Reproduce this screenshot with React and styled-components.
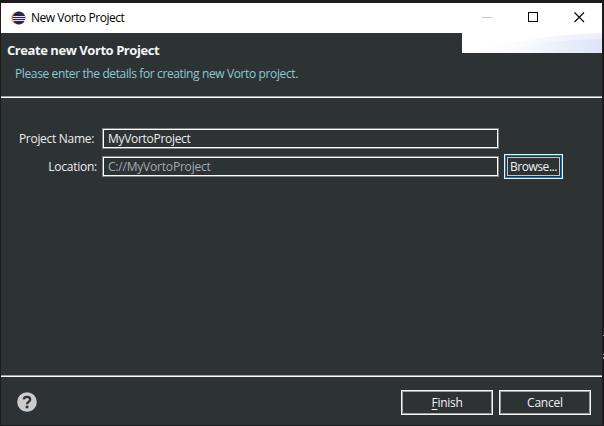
import React from "react";
import styled, { createGlobalStyle } from "styled-components";

const GlobalStyle = createGlobalStyle`
  * { box-sizing: border-box; }
  body { margin: 0; background: #1c1c1f; overflow: hidden; }
`;

const Desktop = styled.div`
  position: relative;
  width: 604px;
  height: 426px;
  padding: 3px 2px 1px 1px;
  background: #1c1c1f;
  font-family: "Open Sans", "Noto Sans", sans-serif;
  font-size: 12px;
  line-height: 16px;
`;

const Window = styled.main`
  display: flex;
  flex-direction: column;
  height: 422px;
  background: #2d3235;
`;

const Text = styled.span`
  white-space: pre;
  letter-spacing: ${(p) => p.$track || 0}px;
`;

const TitleBar = styled.header`
  display: flex;
  align-items: center;
  height: 30px;
  flex: none;
  padding: 0 17px 0 10px;
  background: #fff;
  color: #000;
`;

const Title = styled.div`
  flex: 1;
  padding: 0 0 1px 5px;
`;

const WindowControls = styled.div`
  display: flex;
  gap: 35px;
  padding-bottom: 2px;
  svg { display: block; }
`;

const Header = styled.section`
  display: flex;
  justify-content: space-between;
  flex: none;
  height: 63px;
`;

const HeaderText = styled.div`
  padding: 9px 0 0 6px;
`;

const Heading = styled.h1`
  margin: 0;
  color: #f4f4f4;
  font-size: 13px;
  line-height: 16px;
  font-weight: 700;
`;

const Description = styled.p`
  margin: 8px 0 0 8px;
  color: #8fc9cf;
`;

const Banner = styled.svg`
  display: block;
  width: 140px;
  height: 20px;
`;

const Separator = styled.div`
  flex: none;
  height: 2px;
  border-top: 1px solid #a0a0a0;
  border-bottom: 1px solid #fff;
`;

const Form = styled.section`
  display: grid;
  grid-template-columns: 96px 397px 59px;
  grid-template-rows: 21px 25px;
  column-gap: 5px;
  row-gap: 5px;
  align-items: center;
  flex: none;
  height: 277px;
  padding-top: 30px;
  align-content: start;
  color: #eee;
`;

const Label = styled.label`
  grid-column: 1;
  justify-self: end;
  padding-right: ${(p) => p.$inset || 0}px;
`;

const Field = styled.div`
  grid-column: 2;
  height: 21px;
  padding: 1px 5px;
  border: 1px solid #808080;
  box-shadow: inset 0 0 0 1px #fff;
  color: ${(p) => (p.$disabled ? "#a4acb0" : "#eee")};
  line-height: 18px;
`;

const Button = styled.button`
  width: ${(p) => p.$width}px;
  height: 25px;
  padding: 0;
  border: 1px solid #f4f4f4;
  background: #2d3235;
  box-shadow: inset 0 0 0 1px #a0a0a0;
  color: #f1f1f1;
  font: inherit;
`;

const FocusedButton = styled(Button)`
  padding: 1px;
  box-shadow: inset 0 0 0 1px #0078d7;
`;

const FocusRing = styled.span`
  display: block;
  height: 19px;
  margin: 0 1px;
  border: 1px solid #c8c5c2;
  line-height: 18px;
`;

const Mnemonic = styled.span`
  text-decoration: underline;
  text-decoration-thickness: 1px;
  text-underline-offset: 2px;
`;

const Footer = styled.footer`
  display: flex;
  align-items: flex-start;
  justify-content: space-between;
  padding: 13px 11px 0 16px;
`;

const HelpIcon = styled.svg`
  display: block;
  width: 20px;
  height: 20px;
  margin-top: 2px;
`;

const Actions = styled.div`
  display: flex;
  gap: 6px;
`;

const EdgeMarks = styled.svg`
  position: absolute;
  right: 0;
  top: 334px;
  width: 1px;
  height: 26px;
`;

function EclipseLogo() {
  return (
    <svg width="15" height="14" viewBox="0 0 15 14">
      <circle cx="6.800" cy="7" r="6.500" fill="#f59b38" />
      <circle cx="8" cy="7" r="6.400" fill="#2c2255" />
      <path d="M2 5.500h12M1.600 7.500h12.800M2 9.500h12" stroke="#e4e1f1" strokeWidth="1" />
    </svg>
  );
}

export default function App() {
  return (
    <Desktop>
      <GlobalStyle />
      <Window>
        <TitleBar>
          <EclipseLogo />
          <Title><Text $track={-0.46}>New Vorto Project</Text></Title>
          <WindowControls>
            <svg width="11" height="11"><path d="M0 5.500h10" stroke="#c5c5c5" /></svg>
            <svg width="11" height="11"><rect x=".5" y=".5" width="9" height="9" fill="none" stroke="#000" /></svg>
            <svg width="11" height="11"><path d="M.5 .5l9.500 9.500M10 .5L.5 10" stroke="#000" strokeWidth="1.100" /></svg>
          </WindowControls>
        </TitleBar>
        <Header>
          <HeaderText>
            <Heading><Text $track={-0.44}>Create new Vorto Project</Text></Heading>
            <Description><Text $track={-0.38}>Please enter the details for creating new Vorto project.</Text></Description>
          </HeaderText>
          <Banner viewBox="0 0 140 20">
            <defs>
              <linearGradient id="sky"><stop stopColor="#fff" /><stop offset=".45" stopColor="#f9fbfe" /><stop offset="1" stopColor="#e9eefa" /></linearGradient>
              <linearGradient id="sweep"><stop stopColor="#f5f8fd" stopOpacity="0" /><stop offset="1" stopColor="#dce4f7" /></linearGradient>
            </defs>
            <path d="M0 0h140v20H0z" fill="#fff" />
            <path d="M5 20C40 10 90 1 140 0v20z" fill="url(#sky)" />
            <path d="M30 20C65 11 105 6 140 6v14z" fill="url(#sweep)" />
          </Banner>
        </Header>
        <Separator />
        <Form>
          <Label $inset={3}><Text $track={-0.3}>Project Name:</Text></Label>
          <Field><Text $track={-0.3}>MyVortoProject</Text></Field>
          <Label><Text $track={-0.25}>Location:</Text></Label>
          <Field $disabled><Text $track={-0.2}>C://MyVortoProject</Text></Field>
          <FocusedButton $width={59}><FocusRing><Text $track={-0.45}>Browse...</Text></FocusRing></FocusedButton>
        </Form>
        <Separator />
        <Footer>
          <HelpIcon viewBox="0 0 20 20">
            <circle cx="10" cy="10" r="9.800" fill="#cbcbcb" />
            <path d="M6.700 7.400C7 5.400 8.300 4.900 10 4.900c1.900 0 3.200 1 3.200 2.700 0 2.400-3.200 2.200-3.200 4.600" fill="none" stroke="#2d3235" strokeWidth="2.300" />
            <path d="M8.700 13.600h2.700v2.700H8.700z" fill="#2d3235" />
          </HelpIcon>
          <Actions>
            <Button $width={92}><Text $track={-0.3}><Mnemonic>F</Mnemonic>inish</Text></Button>
            <Button $width={92}><Text $track={-0.2}>Cancel</Text></Button>
          </Actions>
        </Footer>
      </Window>
      <EdgeMarks><path d="M0 1h1v1H0zM0 20h1v1H0zM0 23h1v2H0z" fill="#aaa" /></EdgeMarks>
    </Desktop>
  );
}
